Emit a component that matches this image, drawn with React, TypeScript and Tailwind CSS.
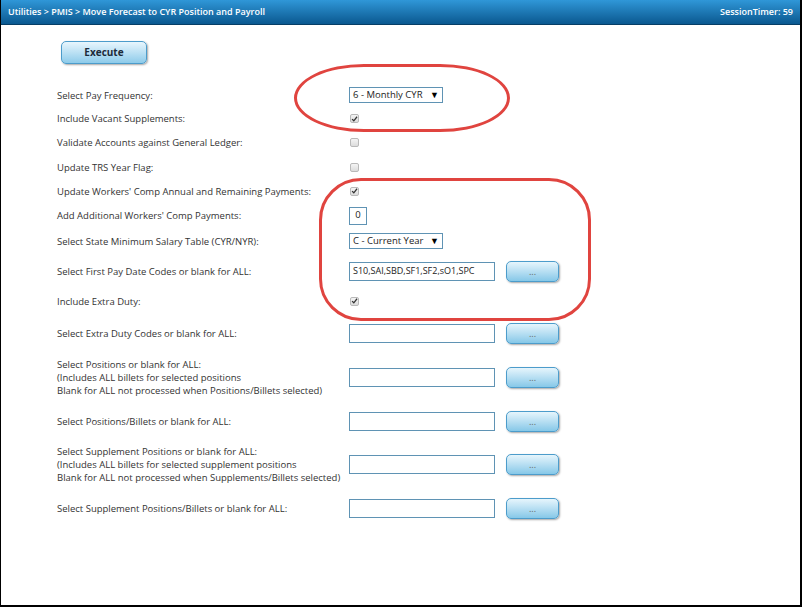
import React from "react"

const font = { fontFamily: '"Open Sans", "Liberation Sans", sans-serif' }

const Check = ({ checked }: { checked?: boolean }) => (
  <span className="w-[9px] h-[9px] ml-[1px] rounded-[2px] border border-[#b9b9b9] bg-gradient-to-b from-[#f4f4f4] to-[#dcdcdc] flex items-center justify-center">
    {checked && (
      <svg viewBox="0 0 10 10" className="w-[8px] h-[8px]">
        <path d="M1.5 5.2 L4 7.6 L8.6 1.8" fill="none" stroke="#333" strokeWidth="1.8" />
      </svg>
    )}
  </span>
)

const Dots = () => (
  <button className="ml-[11px] w-[53px] h-[21px] rounded-[5px] border border-[#4c9ccb] bg-gradient-to-b from-[#e6f5fc] to-[#86c8e8] shadow-[1px_1px_2px_rgba(0,0,0,0.35)] text-[9px] text-[#666] leading-none">
    ...
  </button>
)

const TextBox = ({ value }: { value?: string }) => (
  <div className="w-[146px] h-[19px] border-[1.5px] border-[#5f93b4] bg-white flex items-center px-[3px] text-[9px] text-[#222]">
    {value}
  </div>
)

const SelectBox = ({ value }: { value: string }) => (
  <div className="w-[94px] h-[16px] border-[1.5px] border-[#5f93b4] bg-white flex items-center justify-between px-[3px] text-[9.5px] text-[#222]">
    <span>{value}</span>
    <span className="text-[9px] text-black">▼</span>
  </div>
)

type Row = { h: number; label: string[]; control: React.ReactNode }

const rows: Row[] = [
  { h: 24, label: ["Select Pay Frequency:"], control: <SelectBox value="6 - Monthly CYR" /> },
  { h: 23, label: ["Include Vacant Supplements:"], control: <Check checked /> },
  { h: 25, label: ["Validate Accounts against General Ledger:"], control: <Check /> },
  { h: 24, label: ["Update TRS Year Flag:"], control: <Check /> },
  { h: 24, label: ["Update Workers' Comp Annual and Remaining Payments:"], control: <Check checked /> },
  {
    h: 25,
    label: ["Add Additional Workers' Comp Payments:"],
    control: (
      <div className="w-[18px] h-[18px] border-[1.5px] border-[#5f93b4] bg-white flex items-center justify-center text-[9.5px] text-[#222]">
        0
      </div>
    ),
  },
  { h: 26, label: ["Select State Minimum Salary Table (CYR/NYR):"], control: <SelectBox value="C - Current Year" /> },
  {
    h: 34,
    label: ["Select First Pay Date Codes or blank for ALL:"],
    control: (
      <>
        <TextBox value="S10,SAI,SBD,SF1,SF2,sO1,SPC" />
        <Dots />
      </>
    ),
  },
  { h: 26, label: ["Include Extra Duty:"], control: <Check checked /> },
  {
    h: 38,
    label: ["Select Extra Duty Codes or blank for ALL:"],
    control: (
      <>
        <TextBox />
        <Dots />
      </>
    ),
  },
  {
    h: 50,
    label: [
      "Select Positions or blank for ALL:",
      "(Includes ALL billets for selected positions",
      "Blank for ALL not processed when Positions/Billets selected)",
    ],
    control: (
      <>
        <TextBox />
        <Dots />
      </>
    ),
  },
  {
    h: 38,
    label: ["Select Positions/Billets or blank for ALL:"],
    control: (
      <>
        <TextBox />
        <Dots />
      </>
    ),
  },
  {
    h: 48,
    label: [
      "Select Supplement Positions or blank for ALL:",
      "(Includes ALL billets for selected supplement positions",
      "Blank for ALL not processed when Supplements/Billets selected)",
    ],
    control: (
      <>
        <TextBox />
        <Dots />
      </>
    ),
  },
  {
    h: 40,
    label: ["Select Supplement Positions/Billets or blank for ALL:"],
    control: (
      <>
        <TextBox />
        <Dots />
      </>
    ),
  },
]

export default function App() {
  return (
    <div style={font} className="relative w-[802px] h-[607px] bg-white border-l border-r-2 border-b-2 border-black overflow-hidden">
      <div className="h-[25px] flex items-center justify-between px-[7px] bg-gradient-to-b from-[#2f97d8] to-[#0a5990] border-b border-[#063e66] text-white text-[9px] font-semibold">
        <span>Utilities &gt; PMIS &gt; Move Forecast to CYR Position and Payroll</span>
        <span>SessionTimer: 59</span>
      </div>

      <div className="flex pl-[60px] pt-[16px]">
        <button className="w-[86px] h-[23px] rounded-[5px] border border-[#4c9ccb] bg-gradient-to-b from-[#e8f6fd] to-[#8dcbea] shadow-[1px_1px_2px_rgba(0,0,0,0.35)] text-[10px] font-bold text-[#1c2b3a]">
          Execute
        </button>
      </div>

      <div className="mt-[19px] pl-[56px] flex flex-col">
        {rows.map((r, i) => (
          <div key={i} className="flex items-center" style={{ height: r.h }}>
            <div className="w-[292px] text-[9.5px] leading-[13px] text-[#333]">
              {r.label.map((l, j) => (
                <div key={j}>{l}</div>
              ))}
            </div>
            <div className="flex items-center">{r.control}</div>
          </div>
        ))}
      </div>

      <div className="absolute left-[293px] top-[64px] w-[216px] h-[68px] border-[3px] border-[#e0443f] rounded-[70px/34px]" />
      <div className="absolute left-[318px] top-[178px] w-[272px] h-[143px] border-[3px] border-[#e0443f] rounded-[42px]" />
    </div>
  )
}
